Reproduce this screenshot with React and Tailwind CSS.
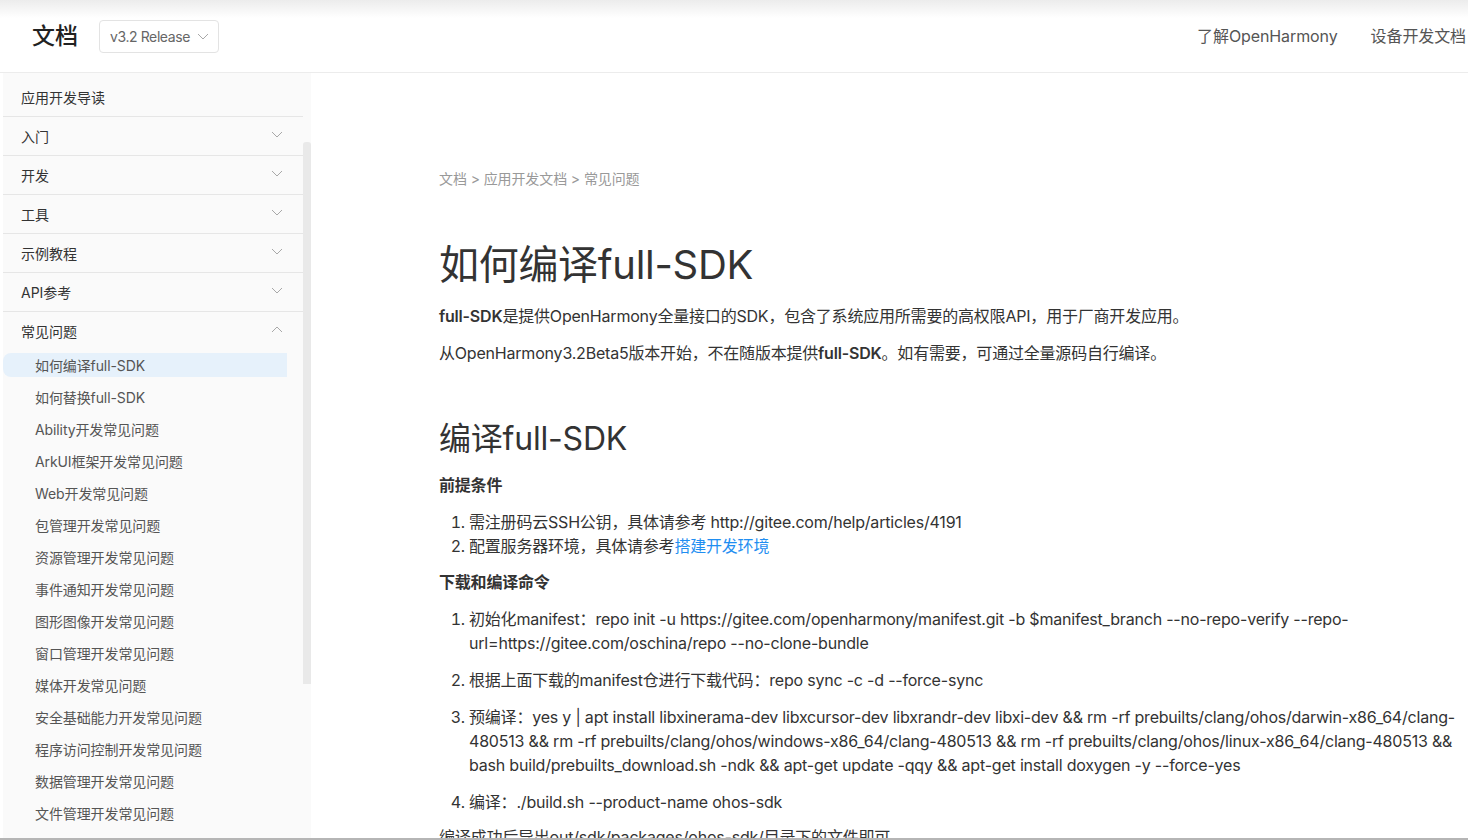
import React from "react";

const FONT = { fontFamily: '"Inter", "Noto Sans CJK SC", "Noto Sans", sans-serif' };

function Chevron({ up = false, className = "" }) {
  return (
    <svg width="12" height="7" viewBox="0 0 12 7" className={className} fill="none">
      {up ? (
        <polyline points="1,6 6,1 11,6" stroke="#a8a8a8" strokeWidth="1" />
      ) : (
        <polyline points="1,1 6,6 11,1" stroke="#a8a8a8" strokeWidth="1" />
      )}
    </svg>
  );
}

const topItems = [
  { label: "入门" },
  { label: "开发" },
  { label: "工具" },
  { label: "示例教程" },
  { label: "API参考" },
];

const subItems = [
  "如何编译full-SDK",
  "如何替换full-SDK",
  "Ability开发常见问题",
  "ArkUI框架开发常见问题",
  "Web开发常见问题",
  "包管理开发常见问题",
  "资源管理开发常见问题",
  "事件通知开发常见问题",
  "图形图像开发常见问题",
  "窗口管理开发常见问题",
  "媒体开发常见问题",
  "安全基础能力开发常见问题",
  "程序访问控制开发常见问题",
  "数据管理开发常见问题",
  "文件管理开发常见问题",
];

function Sidebar() {
  return (
    <aside className="w-[311px] shrink-0 flex bg-white">
      <div className="w-[3px] shrink-0 bg-white" />
      <div className="flex-1 flex bg-[#fafafa] overflow-hidden">
        <div className="w-[300px] shrink-0 pt-[5px]">
          <div className="h-[39px] border-b border-[#e6e6e6] flex items-center pl-[18px] text-[14px] text-[#333]">
            应用开发导读
          </div>
          {topItems.map((it) => (
            <div
              key={it.label}
              className="h-[39px] border-b border-[#e6e6e6] flex items-center justify-between pl-[18px] pr-[20px] text-[14px] text-[#333]"
            >
              <span>{it.label}</span>
              <Chevron className="-mt-[3px]" />
            </div>
          ))}
          <div className="h-[38px] flex items-center justify-between pl-[18px] pr-[20px] text-[14px] text-[#333]">
            <span>常见问题</span>
            <Chevron up className="-mt-[3px]" />
          </div>
          <div className="pt-[3px] pr-[16px]">
            {subItems.map((s, i) => (
              <div
                key={s}
                className={
                  "h-[24px] mb-[8px] flex items-center pl-[32px] text-[14px] text-[#555] tracking-[-0.1px] " +
                  (i === 0 ? "bg-[#e6f1fb] rounded-l-[8px]" : "")
                }
              >
                {s}
              </div>
            ))}
          </div>
        </div>
        <div className="w-[8px] shrink-0 flex flex-col">
          <div className="h-[69px] shrink-0" />
          <div className="h-[542px] shrink-0 bg-[#e9e9e9] rounded-t-[3px]" />
        </div>
      </div>
    </aside>
  );
}

function Content() {
  return (
    <main className="flex-1 min-w-0 pl-[128px] pr-[10px] pt-[96px] text-[#333] tracking-[-0.2px]">
      <div className="text-[14px] leading-[20px] text-[#999] tracking-[-0.1px]">
        文档 &gt; 应用开发文档 &gt; 常见问题
      </div>
      <h1 className="mt-[48px] text-[40px] leading-[56px] font-normal text-[#333] tracking-[-0.3px]">
        如何编译full-SDK
      </h1>
      <p className="mt-[11px] text-[16px] leading-[24px]">
        <span className="font-semibold">full-SDK</span>是提供OpenHarmony全量接口的SDK，包含了系统应用所需要的高权限API，用于厂商开发应用。
      </p>
      <p className="mt-[13px] text-[16px] leading-[24px]">
        从OpenHarmony3.2Beta5版本开始，不在随版本提供<span className="font-semibold">full-SDK</span>。如有需要，可通过全量源码自行编译。
      </p>
      <h2 className="mt-[52px] text-[32px] leading-[44px] font-normal text-[#333]">编译full-SDK</h2>
      <h4 className="mt-[12px] text-[16px] leading-[24px] font-semibold">前提条件</h4>
      <ol className="mt-[13px] list-decimal pl-[30px] text-[16px] leading-[24px]">
        <li>需注册码云SSH公钥，具体请参考 http://gitee.com/help/articles/4191</li>
        <li>
          配置服务器环境，具体请参考<span className="text-[#1f8ef1]">搭建开发环境</span>
        </li>
      </ol>
      <h4 className="mt-[12px] text-[16px] leading-[24px] font-semibold">下载和编译命令</h4>
      <ol className="mt-[13px] list-decimal pl-[30px] text-[16px] leading-[24px] flex flex-col gap-[13px]">
        <li>
          <span className="whitespace-nowrap">初始化manifest：repo init -u https://gitee.com/openharmony/manifest.git -b $manifest_branch --no-repo-verify --repo-</span>
          <br />
          url=https://gitee.com/oschina/repo --no-clone-bundle
        </li>
        <li>根据上面下载的manifest仓进行下载代码：repo sync -c -d --force-sync</li>
        <li>
          <span className="whitespace-nowrap">预编译：yes y | apt install libxinerama-dev libxcursor-dev libxrandr-dev libxi-dev &amp;&amp; rm -rf prebuilts/clang/ohos/darwin-x86_64/clang-</span>
          <br />
          <span className="whitespace-nowrap">480513 &amp;&amp; rm -rf prebuilts/clang/ohos/windows-x86_64/clang-480513 &amp;&amp; rm -rf prebuilts/clang/ohos/linux-x86_64/clang-480513 &amp;&amp;</span>
          <br />
          bash build/prebuilts_download.sh -ndk &amp;&amp; apt-get update -qqy &amp;&amp; apt-get install doxygen -y --force-yes
        </li>
        <li>编译：./build.sh --product-name ohos-sdk</li>
      </ol>
      <p className="mt-[11px] text-[16px] leading-[24px]">
        编译成功后导出out/sdk/packages/ohos-sdk/目录下的文件即可。
      </p>
    </main>
  );
}

export default function App() {
  return (
    <div className="h-[840px] w-full flex flex-col overflow-hidden bg-white" style={FONT}>
      <header className="h-[73px] shrink-0 flex items-center justify-between border-b border-[#ececec] bg-[linear-gradient(to_bottom,#ececec,#ffffff_18px)] pl-[32px] pr-[2px]">
        <div className="flex items-center">
          <span className="text-[23px] font-medium text-[#222]">文档</span>
          <div className="ml-[21px] w-[120px] h-[33px] border border-[#e3e3e3] rounded-[4px] flex items-center pl-[10px] pr-[9px] justify-between bg-white">
            <span className="text-[14px] text-[#666] tracking-[-0.4px]">v3.2 Release</span>
            <Chevron />
          </div>
        </div>
        <nav className="flex items-center gap-[33px] text-[16px] text-[#555] tracking-[-0.1px]">
          <span>了解OpenHarmony</span>
          <span>设备开发文档</span>
        </nav>
      </header>
      <div className="flex-1 min-h-0 flex overflow-hidden">
        <Sidebar />
        <Content />
      </div>
      <div className="h-[2px] shrink-0 bg-[#b5b5b5]" />
    </div>
  );
}
